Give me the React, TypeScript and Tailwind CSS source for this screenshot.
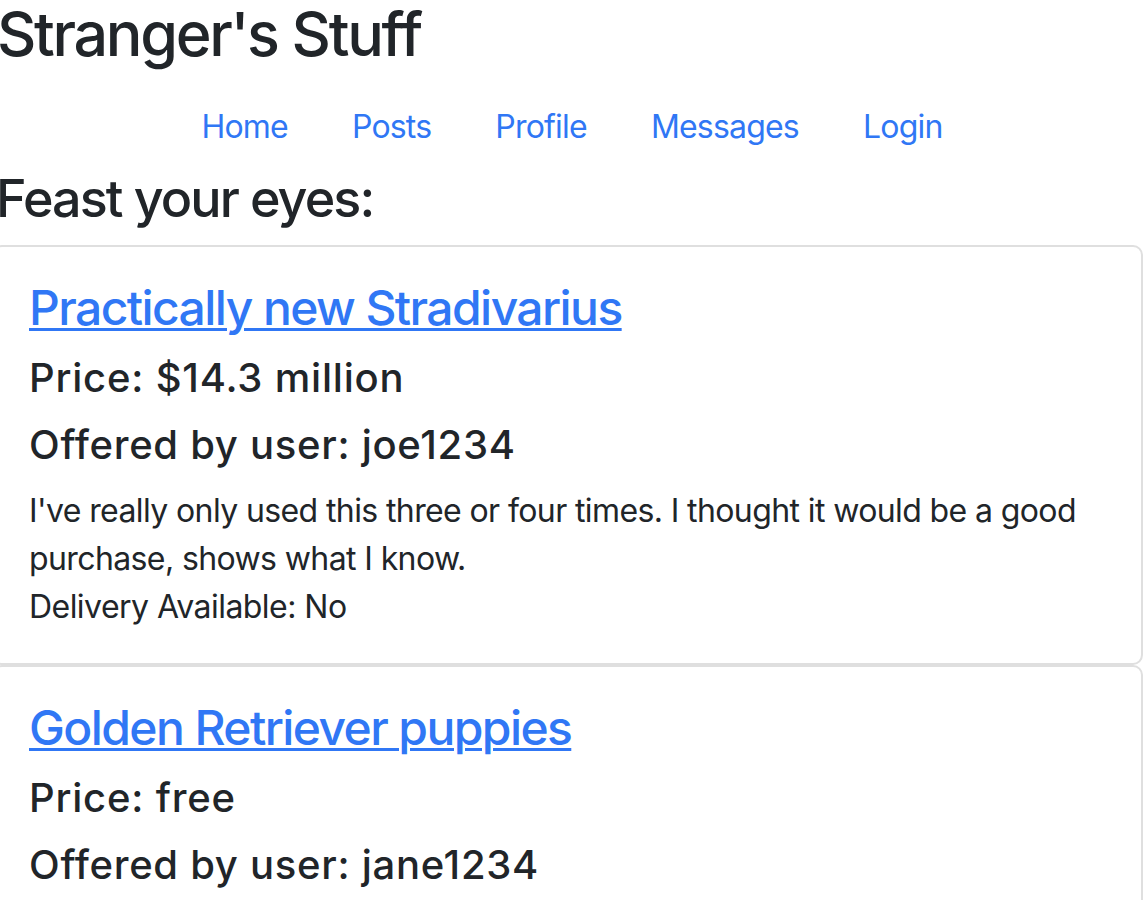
import React from "react";

type Post = {
  title: string;
  price: string;
  seller: string;
  description?: string;
  delivery?: string;
};

const posts: Post[] = [
  {
    title: "Practically new Stradivarius",
    price: "$14.3 million",
    seller: "joe1234",
    description:
      "I've really only used this three or four times. I thought it would be a good purchase, shows what I know.",
    delivery: "No",
  },
  {
    title: "Golden Retriever puppies",
    price: "free",
    seller: "jane1234",
    description: "Ten of them. Please take them.",
    delivery: "Yes",
  },
];

const navItems = ["Home", "Posts", "Profile", "Messages", "Login"];

function PostCard({ post }: { post: Post }) {
  return (
    <div className="-ml-[8px] w-[1151px] rounded-[10px] border-2 border-[#dfdfdf] bg-white py-[32px] pl-[35px] pr-[30px]">
      <h3 className="mb-[18px] text-[48px] font-medium leading-[57px] tracking-[-0.033em]">
        <a href="#" className="text-[#3077f5] underline decoration-[3px] underline-offset-[3px]">
          {post.title}
        </a>
      </h3>
      <h5 className="mb-[19px] text-[40px] font-medium leading-[48px] tracking-[0.02em]">
        Price: {post.price}
      </h5>
      <h5 className="mb-[18px] text-[40px] font-medium leading-[48px] tracking-[0.018em]">
        Offered by user: {post.seller}
      </h5>
      <p className="text-[32px] leading-[48px] tracking-[-0.019em]">{post.description}</p>
      <p className="text-[32px] leading-[48px] tracking-[-0.017em]">
        Delivery Available: {post.delivery}
      </p>
    </div>
  );
}

export default function App() {
  return (
    <div className="h-[900px] w-[1144px] overflow-hidden bg-white font-['Inter',sans-serif] text-[#212529]">
      <h1 className="-ml-[3px] mb-[18px] text-[61px] font-medium leading-[69px] tracking-[-0.038em]">
        Stranger's Stuff
      </h1>
      <ul className="flex justify-center">
        {navItems.map((item) => (
          <li key={item}>
            <a
              href="#"
              className="block px-[32px] py-[16px] text-[32px] leading-[48px] tracking-[-0.025em] text-[#3077f5]"
            >
              {item}
            </a>
          </li>
        ))}
      </ul>
      <h2 className="-ml-[4px] mb-[14px] text-[52px] font-medium leading-[64px] tracking-[-0.036em]">
        Feast your eyes:
      </h2>
      <div className="flex flex-col">
        {posts.map((post) => (
          <PostCard key={post.title} post={post} />
        ))}
      </div>
    </div>
  );
}
